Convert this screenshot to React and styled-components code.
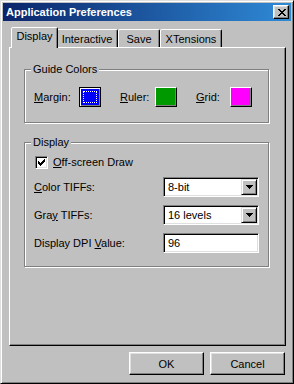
import React from "react";
import styled, { createGlobalStyle } from "styled-components";

const Global = createGlobalStyle`
  html, body { margin: 0; padding: 0; background: #c0c0c0; }
  * { box-sizing: border-box; }
`;

const raised = `
  border: 1px solid;
  border-color: #fff #000 #000 #fff;
  box-shadow: inset -1px -1px #808080, inset 1px 1px #dfdfdf;
`;

const sunken = `
  border: 1px solid;
  border-color: #808080 #fff #fff #808080;
  box-shadow: inset 1px 1px #000, inset -1px -1px #dfdfdf;
`;

const Window = styled.div`
  width: 294px;
  height: 384px;
  background: #c0c0c0;
  border: 1px solid;
  border-color: #dfdfdf #000 #000 #dfdfdf;
  box-shadow: inset 1px 1px #fff, inset -1px -1px #808080;
  padding: 2px;
  display: flex;
  flex-direction: column;
  font-family: "Liberation Sans", Arial, sans-serif;
  font-size: 11px;
  color: #000;
`;

const TitleBar = styled.div`
  height: 18px;
  flex: none;
  display: flex;
  align-items: center;
  justify-content: space-between;
  padding: 0 2px 0 3px;
  background: linear-gradient(to right, #0a246a, #2f8ad6);
  color: #fff;
  font-weight: bold;
  font-size: 11px;
`;

const CloseBtn = styled.div`
  width: 16px;
  height: 14px;
  background: #c0c0c0;
  border: 1px solid;
  border-color: #fff #000 #000 #fff;
  box-shadow: inset -1px -1px #808080, inset 1px 1px #dfdfdf;
  display: flex;
  align-items: center;
  justify-content: center;
  padding-left: 1px;
`;

const Body = styled.div`
  flex: 1;
  display: flex;
  flex-direction: column;
  padding: 6px 5px 6px 6px;
`;

const TabStrip = styled.div`
  display: flex;
  align-items: flex-end;
  height: 20px;
  padding-left: 4px;
  flex: none;
`;

const Tab = styled.div`
  width: ${(p) => p.$w}px;
  height: ${(p) => (p.$active ? 21 : 18)}px;
  margin: ${(p) => (p.$active ? "0 -2px -1px -2px" : "0")};
  position: relative;
  z-index: ${(p) => (p.$active ? 2 : 1)};
  background: #c0c0c0;
  border: 1px solid;
  border-bottom: none;
  border-color: #fff #000 transparent #fff;
  border-radius: 2px 2px 0 0;
  box-shadow: inset -1px 0 #808080;
  text-align: center;
  line-height: 13px;
  padding-top: ${(p) => (p.$active ? 2 : 3)}px;
  white-space: nowrap;
`;

const Panel = styled.div`
  flex: 1;
  border: 1px solid;
  border-color: #fff #000 #000 #fff;
  box-shadow: inset -1px -1px #808080;
  padding: 21px 16px 0 14px;
  display: flex;
  flex-direction: column;
  gap: 19px;
`;

const Group = styled.div`
  position: relative;
  border: 1px solid #808080;
  box-shadow: inset 1px 1px #fff, 1px 1px #fff;
  padding: ${(p) => p.$pad};
  display: flex;
  flex-direction: ${(p) => (p.$column ? "column" : "row")};
  gap: ${(p) => (p.$column ? "8px" : "19px")};
`;

const Legend = styled.span`
  position: absolute;
  top: -7px;
  left: 6px;
  padding: 0 2px;
  background: #c0c0c0;
  line-height: 13px;
`;

const U = styled.span`
  text-decoration: underline;
`;

const SwatchItem = styled.div`
  width: ${(p) => p.$w}px;
  display: flex;
  align-items: center;
  justify-content: space-between;
  line-height: 13px;
`;

const Swatch = styled.div`
  width: 22px;
  height: 20px;
  background: ${(p) => p.$color};
  display: flex;
  padding: 3px;
  border: 1px solid;
  border-color: ${(p) => (p.$focused ? "#000" : "#fff #000 #000 #fff")};
  box-shadow: ${(p) =>
    p.$focused
      ? "inset 1px 1px #fff, inset -1px -1px #808080"
      : "inset -1px -1px #808080"};
`;

const FocusDots = styled.div`
  flex: 1;
  border: 1px dotted #fff;
`;

const CheckRow = styled.div`
  display: flex;
  align-items: center;
  height: 13px;
  gap: 5px;
  padding-left: 1px;
  line-height: 13px;
`;

const CheckBox = styled.div`
  width: 13px;
  height: 13px;
  background: #fff;
  ${sunken}
  display: flex;
  align-items: center;
  justify-content: center;
`;

const Row = styled.div`
  display: flex;
  align-items: center;
  justify-content: space-between;
  height: 20px;
  line-height: 13px;
`;

const Combo = styled.div`
  width: 96px;
  height: 20px;
  background: #fff;
  ${sunken}
  padding: 1px;
  display: flex;
  align-items: stretch;
`;

const ComboText = styled.div`
  flex: 1;
  padding-left: 3px;
  line-height: 16px;
`;

const DropBtn = styled.div`
  width: 16px;
  background: #c0c0c0;
  border: 1px solid;
  border-color: #dfdfdf #000 #000 #dfdfdf;
  box-shadow: inset 1px 1px #fff, inset -1px -1px #808080;
  display: flex;
  align-items: center;
  justify-content: center;
`;

const ButtonRow = styled.div`
  display: flex;
  justify-content: flex-end;
  gap: 6px;
  margin-top: 6px;
  padding-right: 1px;
  flex: none;
`;

const Button = styled.div`
  width: 75px;
  height: 23px;
  background: #c0c0c0;
  ${raised}
  display: flex;
  align-items: center;
  justify-content: center;
`;

const pix = (rows) =>
  rows.map(([x, y, w]) => `M${x} ${y}h${w}v1h-${w}z`).join("");

const XIcon = () => (
  <svg width="8" height="7" viewBox="0 0 8 7" shapeRendering="crispEdges">
    <path
      fill="#000"
      d={pix([
        [0, 0, 2], [6, 0, 2],
        [1, 1, 2], [5, 1, 2],
        [2, 2, 4],
        [3, 3, 2],
        [2, 4, 4],
        [1, 5, 2], [5, 5, 2],
        [0, 6, 2], [6, 6, 2],
      ])}
    />
  </svg>
);

const Check = () => (
  <svg width="7" height="7" viewBox="0 0 7 7" shapeRendering="crispEdges">
    <path
      fill="#000"
      d={pix([
        [6, 0, 1],
        [5, 1, 2],
        [0, 2, 1], [4, 2, 3],
        [0, 3, 2], [3, 3, 3],
        [0, 4, 5],
        [1, 5, 3],
        [2, 6, 1],
      ])}
    />
  </svg>
);

const Arrow = () => (
  <svg width="7" height="4" viewBox="0 0 7 4" shapeRendering="crispEdges">
    <path fill="#000" d={pix([[0, 0, 7], [1, 1, 5], [2, 2, 3], [3, 3, 1]])} />
  </svg>
);

const tabs = [
  { label: "Display", w: 47, active: true },
  { label: "Interactive", w: 62 },
  { label: "Save", w: 42 },
  { label: "XTensions", w: 62 },
];

export default function App() {
  return (
    <>
      <Global />
      <Window>
        <TitleBar>
          <span>Application Preferences</span>
          <CloseBtn>
            <XIcon />
          </CloseBtn>
        </TitleBar>
        <Body>
          <TabStrip>
            {tabs.map((t) => (
              <Tab key={t.label} $w={t.w} $active={t.active}>
                {t.label}
              </Tab>
            ))}
          </TabStrip>
          <Panel>
            <Group $pad="17px 9px 15px 9px">
              <Legend>Guide Colors</Legend>
              <SwatchItem $w={67}>
                <span>
                  <U>M</U>argin:
                </span>
                <Swatch $color="#0000f8" $focused>
                  <FocusDots />
                </Swatch>
              </SwatchItem>
              <SwatchItem $w={57}>
                <span>
                  <U>R</U>uler:
                </span>
                <Swatch $color="#009a00" />
              </SwatchItem>
              <SwatchItem $w={56}>
                <span>
                  <U>G</U>rid:
                </span>
                <Swatch $color="#ff00ff" />
              </SwatchItem>
            </Group>
            <Group $column $pad="13px 9px 13px 9px">
              <Legend>Display</Legend>
              <CheckRow>
                <CheckBox>
                  <Check />
                </CheckBox>
                <span>
                  <U>O</U>ff-screen Draw
                </span>
              </CheckRow>
              <Row>
                <span>
                  <U>C</U>olor TIFFs:
                </span>
                <Combo>
                  <ComboText>8-bit</ComboText>
                  <DropBtn>
                    <Arrow />
                  </DropBtn>
                </Combo>
              </Row>
              <Row>
                <span>
                  Gra<U>y</U> TIFFs:
                </span>
                <Combo>
                  <ComboText>16 levels</ComboText>
                  <DropBtn>
                    <Arrow />
                  </DropBtn>
                </Combo>
              </Row>
              <Row>
                <span>
                  Display DPI <U>V</U>alue:
                </span>
                <Combo>
                  <ComboText>96</ComboText>
                </Combo>
              </Row>
            </Group>
          </Panel>
          <ButtonRow>
            <Button>OK</Button>
            <Button>Cancel</Button>
          </ButtonRow>
        </Body>
      </Window>
    </>
  );
}
